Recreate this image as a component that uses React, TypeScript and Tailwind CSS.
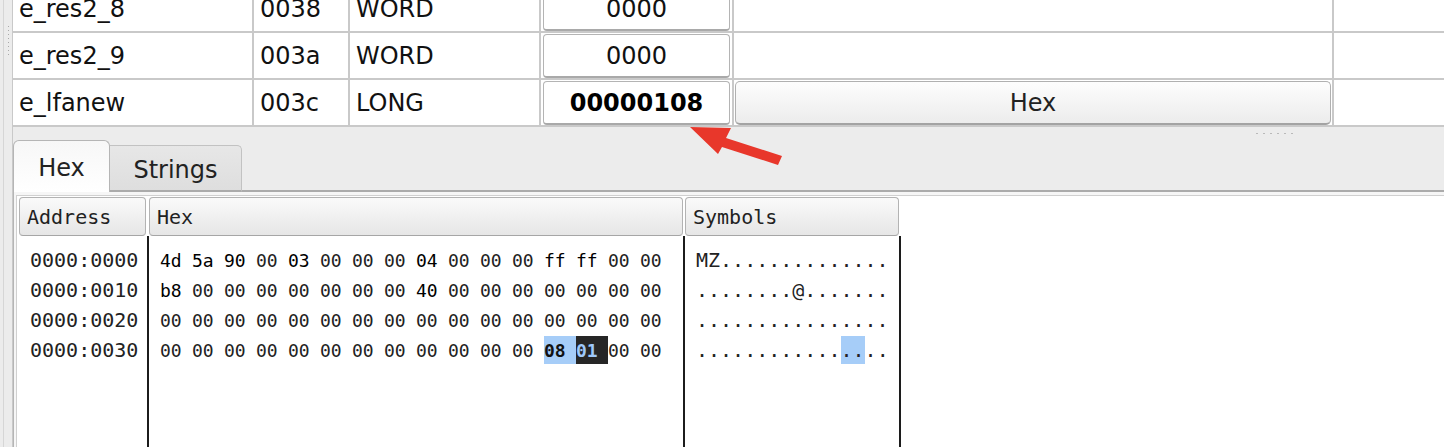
import React from 'react';

const FIELDS = [
  { name: 'e_res2_8', off: '0038', type: 'WORD', val: '0000' },
  { name: 'e_res2_9', off: '003a', type: 'WORD', val: '0000' },
  { name: 'e_lfanew', off: '003c', type: 'LONG', val: '00000108', bold: true, button: 'Hex' },
];

const HEX = [
  '4d 5a 90 00 03 00 00 00 04 00 00 00 ff ff 00 00',
  'b8 00 00 00 00 00 00 00 40 00 00 00 00 00 00 00',
  '00 00 00 00 00 00 00 00 00 00 00 00 00 00 00 00',
  '00 00 00 00 00 00 00 00 00 00 00 00 08 01 00 00',
];

const SYMBOLS = ['MZ..............', '........@.......', '................', '................'];

const ADDRESSES = ['0000:0000', '0000:0010', '0000:0020', '0000:0030'];

// selection in the last row: byte 12 is part of the range, byte 13 has the cursor
const selection = (row: number, i: number) => {
  if (row !== 3) return '';
  if (i === 12) return 'bg-[#a6cdf8] font-bold text-[#111]';
  if (i === 13) return 'bg-[#262626] font-bold text-[#9fc9fb]';
  return '';
};

const HeaderCell: React.FC<{ label: string; width: string }> = ({ label, width }) => (
  <div
    className={`${width} h-[39px] shrink-0 flex items-center pl-[7px] rounded-[4px] border border-[#b3b3b3] border-b-[#a6a6a6] bg-linear-to-b from-[#fafafa] to-[#e6e6e6] text-[20px] text-[#222]`}
  >
    {label}
  </div>
);

export default function App() {
  return (
    <div className="relative w-[1444px] h-[447px] overflow-hidden flex bg-[#ececec] font-['DejaVu_Sans',sans-serif] text-[#111]">
      {/* left splitter strip */}
      <div className="w-[12px] shrink-0 flex">
        <div className="w-[3px]" />
        <div className="w-px bg-[#d6d6d6]" />
        <div className="flex-1 flex flex-col items-center pt-[26px] gap-[3px]">
          {Array.from({ length: 8 }).map((_, i) => (
            <div key={i} className="w-px h-px bg-[#a9a9a9]" />
          ))}
        </div>
      </div>

      <div className="flex-1 min-w-0 flex flex-col border-l border-[#c9c9c9]">
        {/* structure table */}
        <div className="h-[127px] shrink-0 overflow-hidden bg-white">
          <div className="-mt-[14px]">
            {FIELDS.map((f) => (
              <div key={f.name} className="h-[47px] flex border-b-2 border-[#c9c9c9] text-[24px]">
                <div className="w-[241px] shrink-0 border-r-2 border-[#c9c9c9] flex items-center pl-[6px]">{f.name}</div>
                <div className="w-[96px] shrink-0 border-r-2 border-[#c9c9c9] flex items-center pl-[6px]">{f.off}</div>
                <div className="w-[191px] shrink-0 border-r-2 border-[#c9c9c9] flex items-center pl-[6px]">{f.type}</div>
                <div className="w-[193px] shrink-0 border-r-2 border-[#c9c9c9] pl-[2px] pr-[2px] pt-px">
                  <div
                    className={`h-[44px] flex items-center justify-center rounded-[4px] border border-[#b4b4b4] border-b-2 border-b-[#a9a9a9] bg-white ${f.bold ? 'font-bold text-black' : ''}`}
                  >
                    {f.val}
                  </div>
                </div>
                <div className="w-[600px] shrink-0 border-r-2 border-[#c9c9c9] px-px pt-px">
                  {f.button && (
                    <div className="h-[44px] flex items-center justify-center rounded-[5px] border border-[#b0b0b0] border-b-2 border-b-[#a3a3a3] bg-linear-to-b from-[#fdfdfd] to-[#ececec] text-[#222]">
                      {f.button}
                    </div>
                  )}
                </div>
                <div className="flex-1" />
              </div>
            ))}
          </div>
        </div>

        {/* horizontal splitter handle */}
        <div className="h-[13px] shrink-0 flex items-start pt-[6px] pl-[1243px] gap-[5px]">
          {Array.from({ length: 6 }).map((_, i) => (
            <div key={i} className="w-[2px] h-px bg-[#b9b9b9]" />
          ))}
        </div>

        {/* tab bar */}
        <div className="h-[52px] shrink-0 flex items-end text-[24px] text-[#222]">
          <div className="w-[97px] h-[52px] flex items-center justify-center pt-[3px] rounded-t-[6px] border border-b-0 border-[#b5b5b5] bg-linear-to-b from-[#f7f7f7] to-white">
            Hex
          </div>
          <div className="w-[132px] h-[47px] flex items-center justify-center pt-[3px] rounded-tr-[5px] border-t border-r border-[#c2c2c2] border-b-2 border-b-[#ababab] bg-linear-to-b from-[#e7e7e7] to-[#dedede]">
            Strings
          </div>
          <div className="flex-1 h-[5px] border-b-2 border-[#ababab]" />
        </div>

        {/* tab pane */}
        <div className="flex-1 min-h-0 flex border-l border-[#b5b5b5] bg-[#f6f6f6] pl-[2px] pt-[3px]">
          <div className="flex-1 flex border-l border-t border-[#d0d0d0] bg-white pl-px pt-px font-['DejaVu_Sans_Mono',monospace] text-[#222]">
            {/* address column */}
            <div className="w-[131px] shrink-0 flex flex-col">
              <div className="pl-px">
                <HeaderCell label="Address" width="w-[127px]" />
              </div>
              <div className="flex-1 border-r-2 border-[#1c1c1c] pt-[9px] pl-[12px] text-[20px]">
                {ADDRESSES.map((a) => (
                  <div key={a} className="h-[30px] flex items-center">
                    {a}
                  </div>
                ))}
              </div>
            </div>

            {/* hex column */}
            <div className="w-[536px] shrink-0 flex flex-col">
              <HeaderCell label="Hex" width="w-[534px]" />
              <div className="flex-1 border-r-2 border-[#1c1c1c] pt-[9px] pl-[11px] text-[18px]">
                {HEX.map((line, r) => (
                  <div key={r} className="h-[30px] flex items-center">
                    {line.split(' ').map((b, i) => (
                      <div
                        key={i}
                        className={`w-[32px] h-[28px] shrink-0 flex items-center ${
                          selection(r, i) || (b !== '00' ? 'text-black' : '')
                        }`}
                      >
                        {b}
                      </div>
                    ))}
                  </div>
                ))}
              </div>
            </div>

            {/* symbols column */}
            <div className="w-[216px] shrink-0 flex flex-col">
              <HeaderCell label="Symbols" width="w-[214px]" />
              <div className="flex-1 border-r-2 border-[#1c1c1c] pt-[9px] pl-[11px] text-[20px]">
                {SYMBOLS.map((s, r) => (
                  <div key={r} className="h-[30px] flex items-center whitespace-pre">
                    {r === 3 ? (
                      <>
                        <span>{s.slice(0, 12)}</span>
                        <span className="h-[28px] flex items-center bg-[#a6cdf8]">{s.slice(12, 14)}</span>
                        <span>{s.slice(14)}</span>
                      </>
                    ) : (
                      s
                    )}
                  </div>
                ))}
              </div>
            </div>
            <div className="flex-1" />
          </div>
        </div>
      </div>

      {/* annotation arrow pointing at e_lfanew value */}
      <svg className="absolute left-0 top-0 pointer-events-none" width="1444" height="447" viewBox="0 0 1444 447">
        <polygon
          points="690,127 731,128 726,138 782,156 778,165 722,147 718,154"
          fill="#e8372b"
        />
      </svg>
    </div>
  );
}
